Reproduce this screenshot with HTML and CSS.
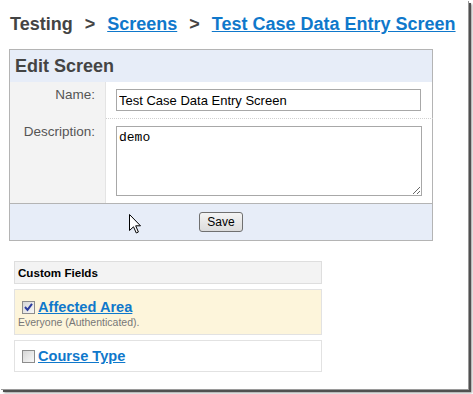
FILE: index.html
```html
<!DOCTYPE html>
<html lang="en">

<head>
  <meta charset="UTF-8">
  <meta name="viewport" content="width=device-width, initial-scale=1.0">
  <title>Edit Screen</title>
  <link rel="stylesheet" href="styles.css">
</head>

<body>
  <div class="screen">
    <h1 class="crumbs">
      <span>Testing</span><span class="sep">&gt;</span><a href="#">Screens</a><span class="sep">&gt;</span><a href="#">Test Case Data Entry Screen</a>
    </h1>

    <div class="panel">
      <div class="panel-head">Edit Screen</div>
      <div class="fields">
        <label class="lbl" for="name">Name:</label>
        <div class="val val-first">
          <input type="text" id="name" class="txt" value="Test Case Data Entry Screen">
        </div>
        <label class="lbl" for="desc">Description:</label>
        <div class="val">
          <textarea id="desc" class="area">demo</textarea>
        </div>
      </div>
      <div class="panel-foot">
        <button class="btn">Save</button>
        <!-- mouse pointer caught in the shot -->
        <svg class="cursor" width="12" height="20" viewBox="0 0 12 20">
          <path d="M0.5 0.5 L0.5 16.5 L4.5 12.8 L7.3 19 L9.4 18 L6.7 11.8 L11.5 11.8 Z" fill="#fff" stroke="#000" stroke-width="1" stroke-linejoin="miter" />
        </svg>
      </div>
    </div>

    <div class="custom">
      <div class="custom-head">Custom Fields</div>
      <div class="cf cf-on">
        <div class="cf-title">
          <span class="chk">
            <svg width="11" height="11" viewBox="0 0 11 11">
              <path d="M2 5 L4.5 7.8 L9 1.8" fill="none" stroke="#2b3c9e" stroke-width="2" />
            </svg>
          </span>
          <a href="#">Affected Area</a>
        </div>
        <div class="cf-note">Everyone (Authenticated).</div>
      </div>
      <div class="cf">
        <div class="cf-title">
          <span class="chk"></span>
          <a href="#">Course Type</a>
        </div>
      </div>
    </div>
  </div>
</body>

</html>
```

FILE: styles.css
```css
* {
  margin: 0;
  padding: 0;
  box-sizing: border-box;
}

html,
body {
  height: 394px;
  overflow: hidden;
}

body {
  background: #fff;
  font-family: "Liberation Sans", Arial, sans-serif;
  color: #444;
}

a {
  color: #0f78cb;
}

.screen {
  width: 468px;
  height: 389px;
  background: #fff;
  box-shadow: 1px 1px 0 #9a9a9a, 3px 3px 0 #505050, 4px 4px 2px rgba(0, 0, 0, 0.4);
  padding-top: 13px;
}

/* breadcrumb */
.crumbs {
  padding-left: 10px;
  font-size: 18px;
  line-height: 22px;
  font-weight: bold;
  color: #444;
  white-space: nowrap;
}

.sep {
  margin: 0 12px;
}

/* edit panel */
.panel {
  margin: 14px 0 0 9px;
  width: 424px;
  border: 1px solid #b4b4b4;
}

.panel-head {
  background: #e7edf8;
  height: 32px;
  line-height: 32px;
  padding-left: 5px;
  font-size: 18px;
  font-weight: bold;
  color: #444;
}

.fields {
  display: grid;
  grid-template-columns: 96px 1fr;
}

.lbl {
  background: #f3f3f3;
  border-right: 1px solid #e4e4e4;
  text-align: right;
  padding: 5px 10px 0 0;
  font-size: 13.5px;
  line-height: 16px;
  color: #555;
}

.val {
  padding: 7px 11px 7px 10px;
}

.val-first {
  border-bottom: 1px dotted #d0d0d0;
}

.txt {
  display: block;
  width: 305px;
  height: 22px;
  border: 1px solid #a8a8a8;
  padding: 0 2px;
  font-family: "Liberation Sans", Arial, sans-serif;
  font-size: 13px;
  color: #000;
  outline: none;
}

.area {
  display: block;
  width: 306px;
  height: 70px;
  border: 1px solid #a8a8a8;
  padding: 3px 2px;
  font-family: "Liberation Mono", "Courier New", monospace;
  font-size: 13px;
  color: #000;
  outline: none;
}

.panel-foot {
  position: relative;
  background: #e7edf8;
  border-top: 1px solid #b4b4b4;
  height: 37px;
  padding-top: 8px;
  display: flex;
  justify-content: center;
  align-items: flex-start;
}

.btn {
  height: 20px;
  padding: 0 7px;
  border: 1px solid #707070;
  border-radius: 3px;
  background: linear-gradient(#f4f4f4, #dcdcdc);
  font-family: "Liberation Sans", Arial, sans-serif;
  font-size: 12px;
  color: #000;
}

.cursor {
  position: absolute;
  left: 119px;
  top: 10px;
}

/* custom fields */
.custom {
  margin: 20px 0 0 14px;
  width: 308px;
}

.custom-head {
  background: #f3f3f3;
  border: 1px solid #dedede;
  height: 23px;
  line-height: 21px;
  padding-left: 3px;
  font-size: 11.6px;
  font-weight: bold;
  color: #000;
}

.cf {
  margin-top: 5px;
  border: 1px solid #e2e2e2;
  padding: 6px 7px 6px 7px;
}

.cf-on {
  background: #fdf5db;
  padding: 8px 7px 5px 3px;
}

.cf-on .cf-title {
  padding-left: 4px;
}

.cf-title {
  display: flex;
  align-items: center;
  gap: 3px;
  height: 18px;
}

.cf-title a {
  font-size: 14.6px;
  font-weight: bold;
  line-height: 18px;
}

.chk {
  width: 13px;
  height: 13px;
  border: 1px solid #8c8c8c;
  background: linear-gradient(135deg, #d6d6d6, #f8f8f8);
  display: flex;
  align-items: center;
  justify-content: center;
}

.cf-note {
  font-size: 10.5px;
  line-height: 13px;
  color: #777;
}
```
